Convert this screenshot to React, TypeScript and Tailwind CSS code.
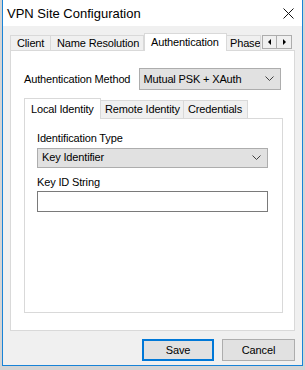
import React from "react";

const font = { fontFamily: '"Liberation Sans", Arial, sans-serif' };

function Chevron() {
  return (
    <svg width="9" height="6" viewBox="0 0 9 6" className="shrink-0">
      <path d="M0.5 0.5 L4.5 4.5 L8.5 0.5" fill="none" stroke="#404040" strokeWidth="1" />
    </svg>
  );
}

function Select({ value, className }: { value: string; className: string }) {
  return (
    <div
      className={`flex items-center justify-between border border-[#adadad] bg-[#e1e1e1] pl-[4px] pr-[6px] text-[11px] text-black ${className}`}
    >
      <span>{value}</span>
      <Chevron />
    </div>
  );
}

const mainTabs = [
  { label: "Client", w: "w-[41px]", pl: "pl-[6px]" },
  { label: "Name Resolution", w: "w-[93px]", pl: "pl-[6px]" },
  { label: "Authentication", w: "w-[83px]", pl: "pl-[6px]", active: true },
  { label: "Phase", w: "w-[34px]", pl: "pl-[3px]" },
];

const innerTabs = [
  { label: "Local Identity", w: "w-[77px]", active: true },
  { label: "Remote Identity", w: "w-[83px]" },
  { label: "Credentials", w: "w-[64px]" },
];

export default function App() {
  return (
    <div
      className="w-[305px] h-[370px] bg-[#d4d4d4] px-[2px] overflow-hidden tracking-[-0.15px]"
      style={font}
    >
      <div className="flex h-[366px] flex-col border-x border-b border-[#1883d7] bg-[#f0f0f0]">
        {/* title bar */}
        <div className="flex h-[26px] items-center justify-between bg-white pl-[4px] pr-[8px] pt-[1px]">
          <span className="text-[13px] tracking-normal text-black">VPN Site Configuration</span>
          <svg width="11" height="11" viewBox="0 0 11 11">
            <path d="M0.5 0.5 L10.5 10.5 M10.5 0.5 L0.5 10.5" stroke="#111" strokeWidth="1" />
          </svg>
        </div>

        <div className="flex flex-1 flex-col px-[7px] pt-[7px]">
          {/* main tabs */}
          <div className="flex h-[17px] items-end">
            {mainTabs.map((t, i) =>
              t.active ? (
                <div
                  key={t.label}
                  className={`relative z-10 -mb-px flex h-[18px] items-center whitespace-nowrap border border-b-0 border-[#d9d9d9] bg-white text-[11px] ${t.w} ${t.pl}`}
                >
                  {t.label}
                </div>
              ) : (
                <div
                  key={t.label}
                  className={`flex h-[15px] items-center overflow-hidden whitespace-nowrap border border-b-0 border-[#d9d9d9] bg-[#f0f0f0] text-[11px] ${t.w} ${t.pl} ${i === 0 ? "" : "border-l-0"}`}
                >
                  {t.label}
                </div>
              )
            )}
            <div className="mb-[1px] ml-[1px] flex">
              <div className="flex h-[14px] w-[15px] items-center justify-center border border-[#adadad] bg-[#f0f0f0]">
                <svg width="3" height="6" viewBox="0 0 3 6">
                  <path d="M3 0 L0 3 L3 6 Z" fill="#000" />
                </svg>
              </div>
              <div className="flex h-[14px] w-[15px] items-center justify-center border border-l-0 border-[#adadad] bg-[#f0f0f0]">
                <svg width="3" height="6" viewBox="0 0 3 6">
                  <path d="M0 0 L3 3 L0 6 Z" fill="#000" />
                </svg>
              </div>
            </div>
          </div>

          <div className="flex h-[281px] w-[285px] flex-col border border-[#d9d9d9] bg-white px-[13px] pt-[17px]">
            <div className="flex items-center">
              <span className="w-[115px] text-[11px]">Authentication Method</span>
              <Select value="Mutual PSK + XAuth" className="h-[22px] w-[143px]" />
            </div>

            {/* inner tabs */}
            <div className="mt-[8px] flex h-[20px] items-end">
              {innerTabs.map((t) =>
                t.active ? (
                  <div
                    key={t.label}
                    className={`relative z-10 -mb-px flex h-[21px] items-center whitespace-nowrap border border-b-0 border-[#d9d9d9] bg-white pl-[6px] text-[11px] ${t.w}`}
                  >
                    {t.label}
                  </div>
                ) : (
                  <div
                    key={t.label}
                    className={`flex h-[18px] items-center whitespace-nowrap border border-b-0 border-l-0 border-[#d9d9d9] bg-[#f0f0f0] pl-[4px] text-[11px] ${t.w}`}
                  >
                    {t.label}
                  </div>
                )
              )}
            </div>
            <div className="flex h-[195px] w-[259px] flex-col border border-[#d9d9d9] bg-white px-[12px] pt-[11px]">
              <span className="text-[11px]">Identification Type</span>
              <Select value="Key Identifier" className="mt-[1px] h-[20px] w-[231px]" />
              <span className="mt-[6px] text-[11px]">Key ID String</span>
              <div className="mt-[1px] h-[21px] w-[231px] border border-[#7a7a7a] bg-white" />
            </div>
          </div>

          {/* buttons */}
          <div className="mt-[8px] flex justify-end gap-[8px]">
            <div className="flex h-[22px] w-[72px] items-center justify-center border-2 border-[#0078d7] bg-[#e1e1e1] text-[11px]">
              Save
            </div>
            <div className="flex h-[22px] w-[73px] items-center justify-center border border-[#adadad] bg-[#e1e1e1] text-[11px]">
              Cancel
            </div>
          </div>
        </div>
      </div>
    </div>
  );
}
